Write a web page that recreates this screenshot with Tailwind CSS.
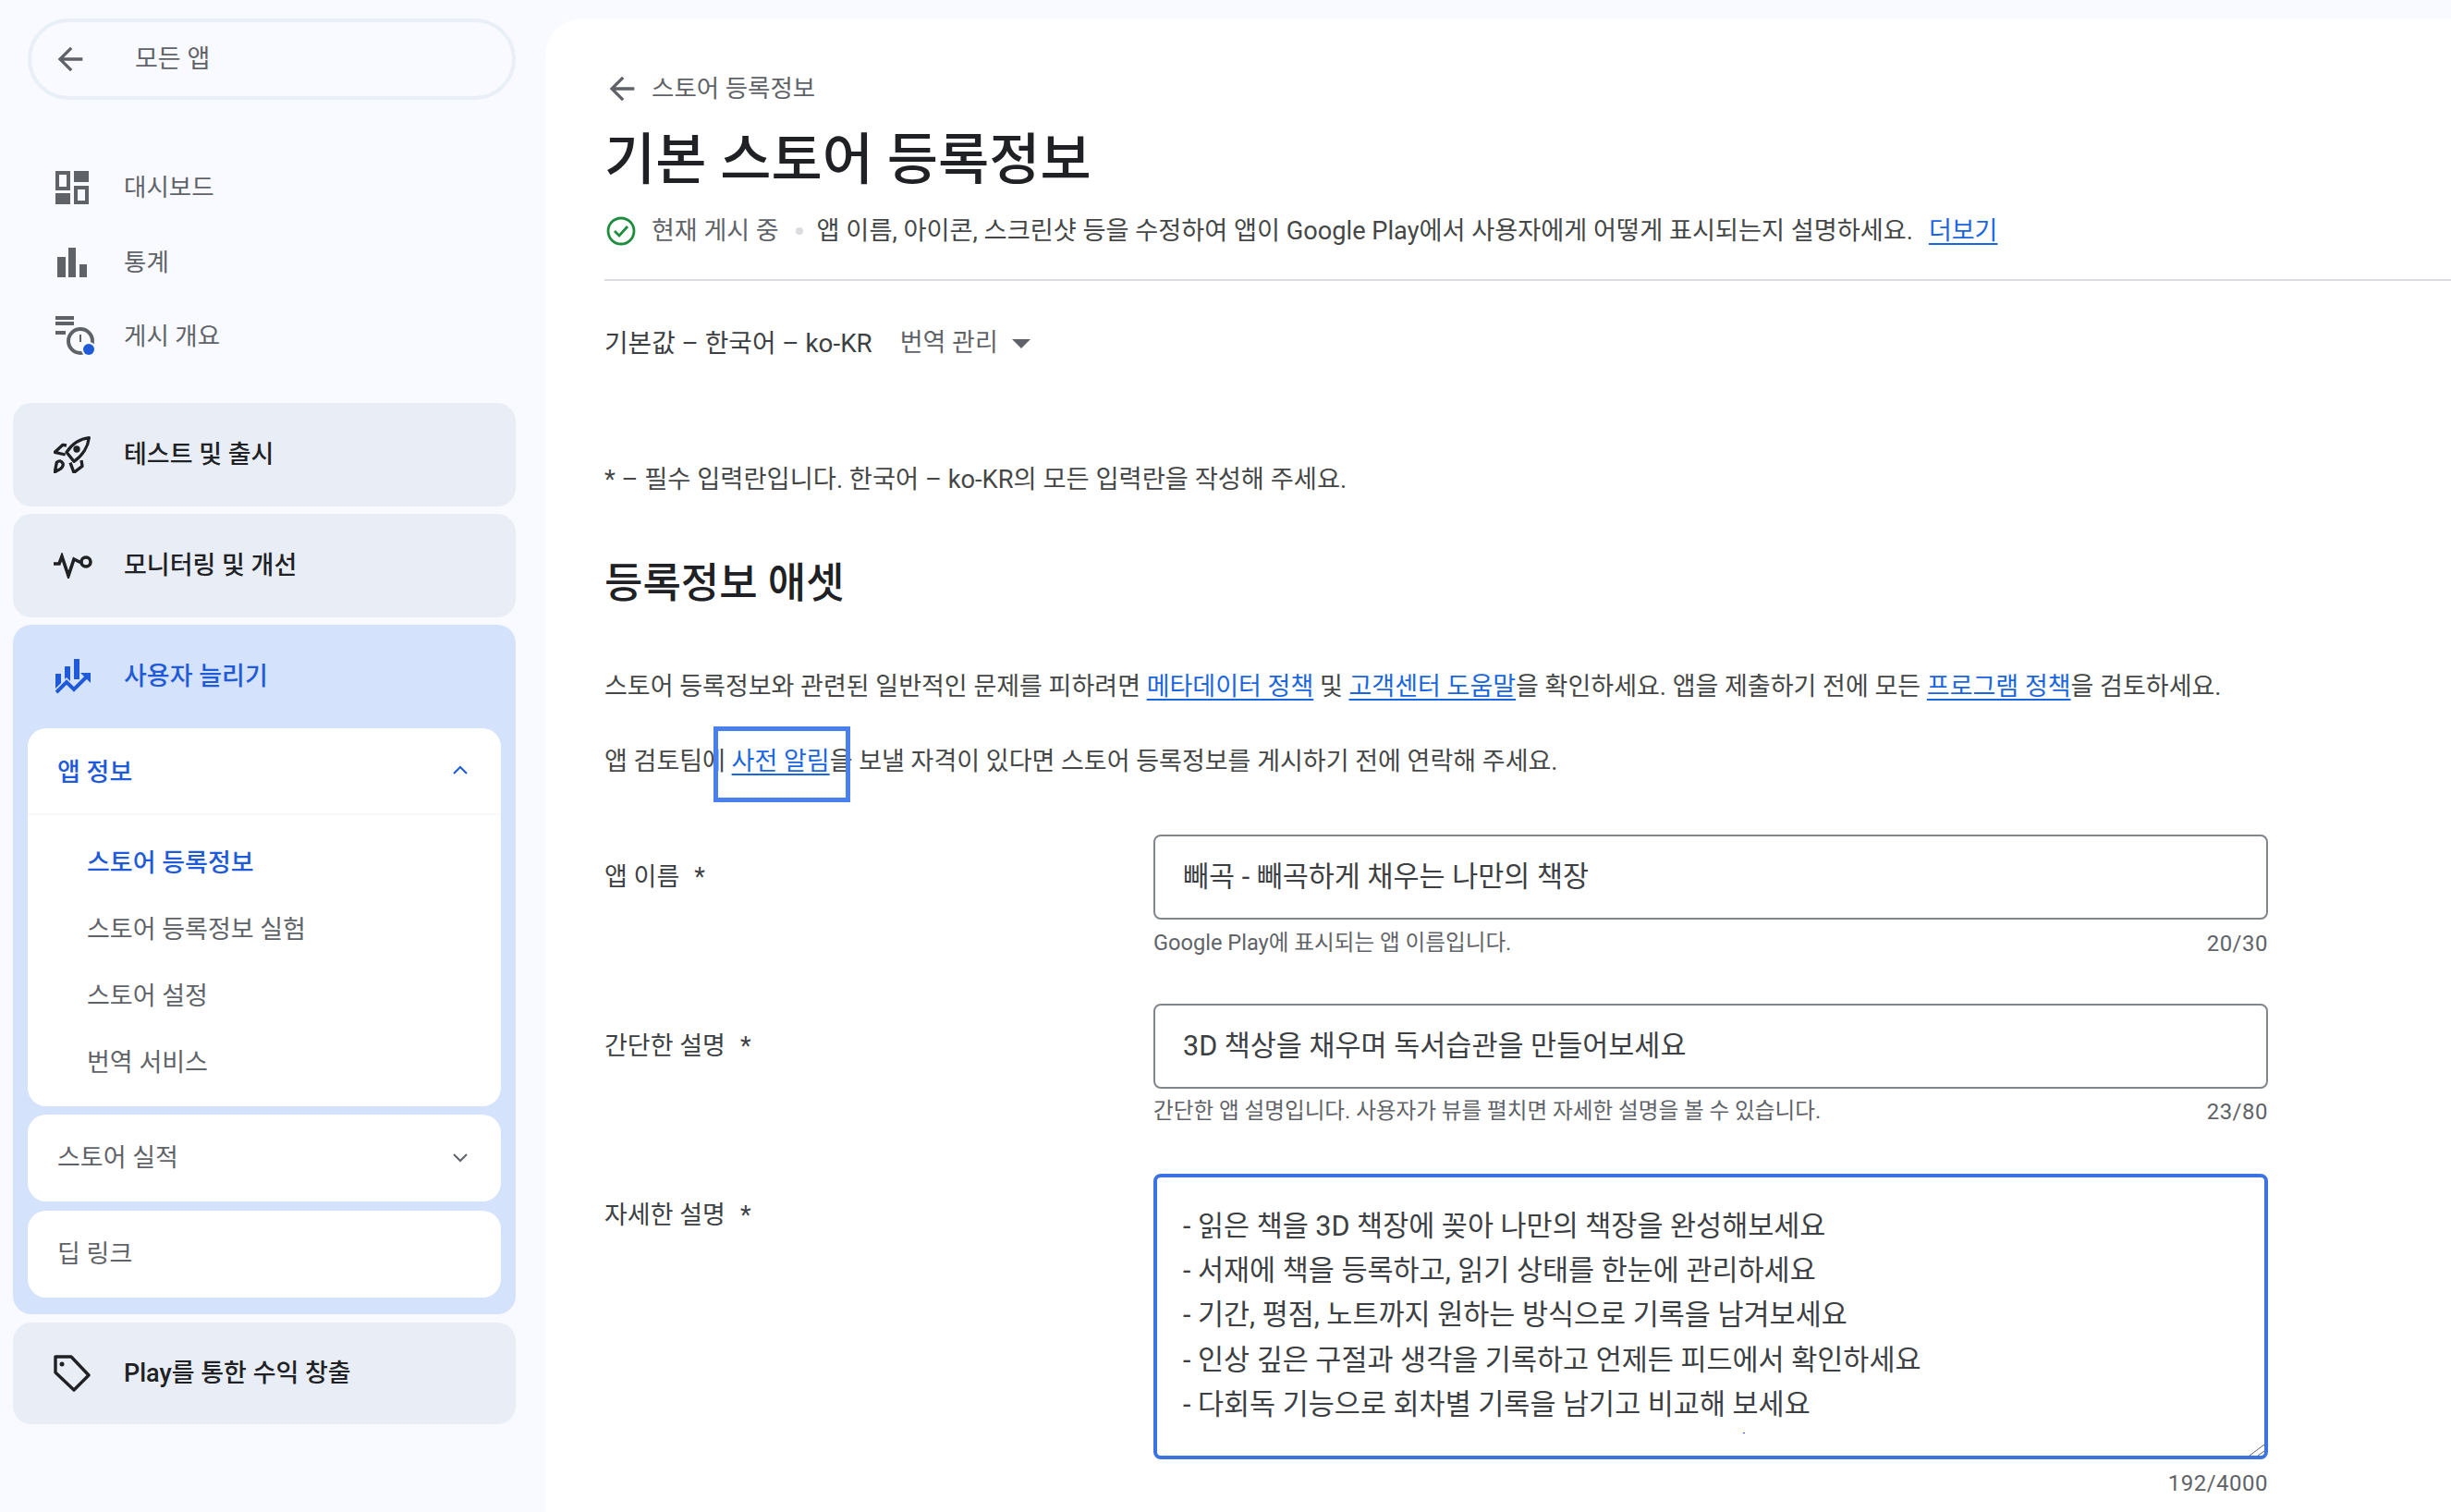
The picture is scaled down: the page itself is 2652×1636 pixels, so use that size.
<!DOCTYPE html>
<html lang="ko">
<head>
    <meta charset="UTF-8">
    <title>기본 스토어 등록정보</title>
    <script src="https://cdn.jsdelivr.net/npm/@tailwindcss/browser@4"></script>
</head>
<body class="bg-[#f8faff] font-['Roboto','Noto_Sans_CJK_KR',sans-serif] text-[27px] text-[#444746] overflow-hidden">
<div class="flex w-[2652px] h-[1636px] overflow-hidden">

    <!-- sidebar -->
    <aside class="w-[590px] shrink-0 pt-[20px]">
        <div class="ml-[30px] w-[528px] h-[88px] rounded-full border-[4px] border-[#e9eff6] flex items-center pl-[22px] text-[#5f6368]">
            <svg class="w-[40px] h-[40px]" viewBox="0 0 24 24" fill="#5f6368"><path d="M20 11H7.83l5.59-5.59L12 4l-8 8 8 8 1.41-1.41L7.83 13H20v-2z"/></svg>
            <span class="ml-[50px]">모든 앱</span>
        </div>

        <nav class="mt-[55px] text-[#5f6368] text-[26.5px]">
            <div class="h-[80px] flex items-center pl-[60px]">
                <svg class="w-[36px] h-[36px] mr-[38px]" viewBox="0 0 36 36" fill="#5f6368">
                    <path fill-rule="evenodd" d="M0 0h16v21H0zM4 4v13h8V4z"/>
                    <rect x="20" width="16" height="12"/>
                    <rect y="24" width="16" height="12"/>
                    <path fill-rule="evenodd" d="M20 16h16v20H20zM24 20v12h8V20z"/>
                </svg>
                <span>대시보드</span>
            </div>
            <div class="h-[81px] flex items-center pl-[60px]">
                <svg class="w-[36px] h-[36px] mr-[38px]" viewBox="0 0 36 36" fill="#5f6368">
                    <rect x="2" y="12" width="9" height="22"/>
                    <rect x="14" y="2" width="8" height="32"/>
                    <rect x="26" y="20" width="8" height="14"/>
                </svg>
                <span>통계</span>
            </div>
            <div class="h-[80px] flex items-center pl-[60px]">
                <svg class="w-[44px] h-[44px] mr-[30px]" viewBox="0 0 44 44">
                    <path d="M0 0h20v4H0zM0 6h20v4H0zM0 16h11v4H0z" fill="#5f6368"/>
                    <circle cx="27" cy="27" r="13" fill="none" stroke="#5f6368" stroke-width="4"/>
                    <path d="M27 20v8" stroke="#5f6368" stroke-width="2" fill="none"/>
                    <circle cx="36" cy="36" r="8" fill="#f8faff"/>
                    <circle cx="36" cy="36" r="6" fill="#1f5bd8"/>
                </svg>
                <span>게시 개요</span>
            </div>
        </nav>

        <div class="ml-[14px] w-[544px] mt-[32px] flex flex-col gap-[8px]">
            <div class="h-[112px] rounded-[20px] bg-[#e9eef6] flex items-center pl-[44px] text-[#202124] font-medium">
                <svg class="w-[40px] h-[40px] mr-[36px]" viewBox="0 0 120 120" fill="none" stroke="#202124" stroke-width="10" stroke-linejoin="round">
                    <path d="M115 5C88 8 62 22 42 52l24 30c29-20 46-50 49-77z"/>
                    <path d="M42 30L30 28 4 52l34 8M90 78l3 19-27 21-12-32"/>
                    <path d="M4 116l6-31q12-10 20 3 3 10-8 18z"/>
                    <circle cx="75" cy="42" r="11" fill="#202124" stroke="none"/>
                </svg>
                <span>테스트 및 출시</span>
            </div>
            <div class="h-[112px] rounded-[20px] bg-[#e9eef6] flex items-center pl-[44px] text-[#202124] font-medium">
                <svg class="w-[42px] h-[28px] mr-[34px]" viewBox="0 0 42 28" fill="none" stroke="#202124" stroke-width="3.6">
                    <path d="M0 12h6l3-8 7 21 6-18 6 3h3"/>
                    <circle cx="35" cy="10" r="5"/>
                </svg>
                <span>모니터링 및 개선</span>
            </div>
            <div class="rounded-[20px] bg-[#d5e2fc] pb-[18px]">
                <div class="h-[112px] flex items-center pl-[46px] text-[#1f5bd8] font-medium">
                    <svg class="w-[38px] h-[38px] mr-[36px]" viewBox="0 0 38 38">
                        <path d="M0 16h6v17H0zM10 8h6v20h-6zM20 0h6v22h-6z" fill="#1f5bd8"/>
                        <path d="M1 36l11-11 8 8 14-14" fill="none" stroke="#d5e2fc" stroke-width="7"/>
                        <path d="M1 36l11-11 8 8 14-14" fill="none" stroke="#1f5bd8" stroke-width="4"/>
                        <path d="M27 15h11v11z" fill="#1f5bd8"/>
                    </svg>
                    <span>사용자 늘리기</span>
                </div>
                <div class="mx-[16px] flex flex-col gap-[9px]">
                    <div class="rounded-[20px] bg-white">
                        <div class="h-[94px] pt-[4px] flex items-center justify-between pl-[32px] pr-[36px] text-[#1f5bd8] font-medium border-b-2 border-[#f8f9fa]">
                            <span>앱 정보</span>
                            <svg class="w-[16px] h-[10px] mb-[6px]" viewBox="0 0 16 10" fill="none" stroke="#1f5bd8" stroke-width="2"><path d="M1 9l7-7 7 7"/></svg>
                        </div>
                        <ul class="pt-[16px] pb-[11px] pl-[64px]">
                            <li class="h-[72px] flex items-center text-[#1f5bd8] font-medium">스토어 등록정보</li>
                            <li class="h-[72px] flex items-center text-[#5f6368]">스토어 등록정보 실험</li>
                            <li class="h-[72px] flex items-center text-[#5f6368]">스토어 설정</li>
                            <li class="h-[72px] flex items-center text-[#5f6368]">번역 서비스</li>
                        </ul>
                    </div>
                    <div class="h-[94px] rounded-[20px] bg-white flex items-center justify-between pl-[32px] pr-[36px] text-[#5f6368]">
                        <span>스토어 실적</span>
                        <svg class="w-[16px] h-[10px]" viewBox="0 0 16 10" fill="none" stroke="#5f6368" stroke-width="2"><path d="M1 1l7 7 7-7"/></svg>
                    </div>
                    <div class="h-[94px] mt-px rounded-[20px] bg-white flex items-center pl-[32px] text-[#5f6368]">딥 링크</div>
                </div>
            </div>
            <div class="h-[110px] mt-px rounded-[20px] bg-[#e9eef6] flex items-center pl-[44px] text-[#202124] font-medium">
                <svg class="w-[40px] h-[40px] mr-[36px]" viewBox="0 0 40 40" fill="none" stroke="#202124" stroke-width="3.4" stroke-linejoin="round">
                    <path d="M2 2h17l19 20-16 16L2 19z"/>
                    <circle cx="9" cy="10" r="2.5" fill="#202124" stroke="none"/>
                </svg>
                <span>Play를 통한 수익 창출</span>
            </div>
        </div>
    </aside>

    <!-- main -->
    <main class="flex-1 mt-[20px] bg-white rounded-tl-[40px] pl-[64px] pt-[58px]">
        <div class="h-[34px] pt-[1px] flex items-center text-[#5f6368] text-[26.5px]">
            <svg class="w-[40px] h-[40px] -ml-px mr-[12px]" viewBox="0 0 24 24" fill="#5f6368"><path d="M20 11H7.83l5.59-5.59L12 4l-8 8 8 8 1.41-1.41L7.83 13H20v-2z"/></svg>
            <span>스토어 등록정보</span>
        </div>
        <h1 class="mt-[21px] h-[72px] pt-[9px] flex items-center text-[60px] font-medium text-[#202124]">기본 스토어 등록정보</h1>
        <div class="mt-[24px] h-[40px] pt-[2px] flex items-center">
            <svg class="w-[32px] h-[32px] ml-[2px] mr-[17px]" viewBox="0 0 32 32" fill="none" stroke="#1e8e3e" stroke-width="2.8">
                <circle cx="16" cy="16" r="14"/>
                <path d="M9 16l5 5 9-10"/>
            </svg>
            <span class="text-[#5f6368]">현재 게시 중</span>
            <span class="w-[8px] h-[8px] rounded-full bg-[#dadce0] ml-[18px] mr-[15px]"></span>
            <span class="text-[27.2px]">앱 이름, 아이콘, 스크린샷 등을 수정하여 앱이 Google Play에서 사용자에게 어떻게 표시되는지 설명하세요.</span>
            <a class="ml-[17px] text-[#1a66e0] underline underline-offset-4">더보기</a>
        </div>
        <div class="mt-[33px] h-[2px] bg-[#dadce0]"></div>

        <div class="mt-[46px] h-[40px] pt-[3px] flex items-center">
            <span class="text-[#3c4043] text-[27.8px]">기본값 – 한국어 – ko-KR</span>
            <span class="ml-[30px] text-[#5f6368]">번역 관리</span>
            <span class="ml-[15px] w-0 h-0 border-x-[10px] border-x-transparent border-t-[10px] border-t-[#5f6368]"></span>
        </div>
        <p class="mt-[107px] h-[40px] leading-[45px] text-[27.3px]">* – 필수 입력란입니다. 한국어 – ko-KR의 모든 입력란을 작성해 주세요.</p>
        <h2 class="mt-[62px] h-[60px] leading-[66px] text-[45px] font-medium text-[#202124]">등록정보 애셋</h2>
        <p class="mt-[62px] h-[40px] leading-[44px]">스토어 등록정보와 관련된 일반적인 문제를 피하려면 <a class="text-[#1a66e0] underline underline-offset-4">메타데이터 정책</a> 및 <a class="text-[#1a66e0] underline underline-offset-4">고객센터 도움말</a>을 확인하세요. 앱을 제출하기 전에 모든 <a class="text-[#1a66e0] underline underline-offset-4">프로그램 정책</a>을 검토하세요.</p>
        <p class="mt-[41px] h-[40px] leading-[44px]">앱 검토팀에 <span class="relative"><a class="text-[#1a66e0] underline underline-offset-4">사전 알림</a><span class="absolute left-[-20px] top-[-22px] w-[148px] h-[82px] border-[5px] border-[#4a80ee]"></span></span>을 보낼 자격이 있다면 스토어 등록정보를 게시하기 전에 연락해 주세요.</p>

        <div class="mt-[61px] flex">
            <label class="w-[594px] h-[88px] pt-[5px] flex items-center text-[#3c4043]">앱 이름<span class="ml-[16px]">*</span></label>
            <div class="w-[1206px]">
                <div class="h-[92px] rounded-[8px] border-2 border-[#80868b] flex items-center pl-[30px] text-[30.5px] text-[#3c4043]">빼곡 - 빼곡하게 채우는 나만의 책장</div>
                <div class="mt-[11px] h-[30px] flex items-center justify-between text-[23.6px] text-[#5f6368]">
                    <span>Google Play에 표시되는 앱 이름입니다.</span>
                    <span class="text-[24px] tracking-[0.5px]">20/30</span>
                </div>
            </div>
        </div>
        <div class="mt-[50px] flex">
            <label class="w-[594px] h-[88px] pt-[5px] flex items-center text-[#3c4043]">간단한 설명<span class="ml-[16px]">*</span></label>
            <div class="w-[1206px]">
                <div class="h-[92px] rounded-[8px] border-2 border-[#80868b] flex items-center pl-[30px] text-[30.5px] text-[#3c4043]">3D 책상을 채우며 독서습관을 만들어보세요</div>
                <div class="mt-[10px] h-[30px] flex items-center justify-between text-[23.6px] text-[#5f6368]">
                    <span>간단한 앱 설명입니다. 사용자가 뷰를 펼치면 자세한 설명을 볼 수 있습니다.</span>
                    <span class="text-[24px] tracking-[0.5px]">23/80</span>
                </div>
            </div>
        </div>
        <div class="mt-[52px] flex">
            <label class="w-[594px] h-[88px] pt-[3px] flex items-center text-[#3c4043]">자세한 설명<span class="ml-[16px]">*</span></label>
            <div class="w-[1206px]">
                <div class="relative h-[309px] rounded-[8px] border-[4px] border-[#3b73e0] pl-[28px] pt-[29px] text-[30.5px] leading-[48.2px] text-[#3c4043]">
                    <div>- 읽은 책을 3D 책장에 꽂아 나만의 책장을 완성해보세요</div>
                    <div>- 서재에 책을 등록하고, 읽기 상태를 한눈에 관리하세요</div>
                    <div>- 기간, 평점, 노트까지 원하는 방식으로 기록을 남겨보세요</div>
                    <div>- 인상 깊은 구절과 생각을 기록하고 언제든 피드에서 확인하세요</div>
                    <div>- 다회독 기능으로 회차별 기록을 남기고 비교해 보세요</div>
                    <span class="absolute left-[634px] top-[276px] w-[2px] h-[1px] bg-[#1f5bd8]"></span>
                    <svg class="absolute right-0 bottom-0 w-[16px] h-[12px]" viewBox="0 0 16 12" fill="none" stroke="#5f6368" stroke-width="1"><path d="M0 12L16 0M9 12l7-5"/></svg>
                </div>
                <div class="mt-[11px] h-[30px] flex items-center justify-end text-[24px] text-[#5f6368] tracking-[0.5px]">192/4000</div>
            </div>
        </div>
    </main>
</div>
</body>
</html>
